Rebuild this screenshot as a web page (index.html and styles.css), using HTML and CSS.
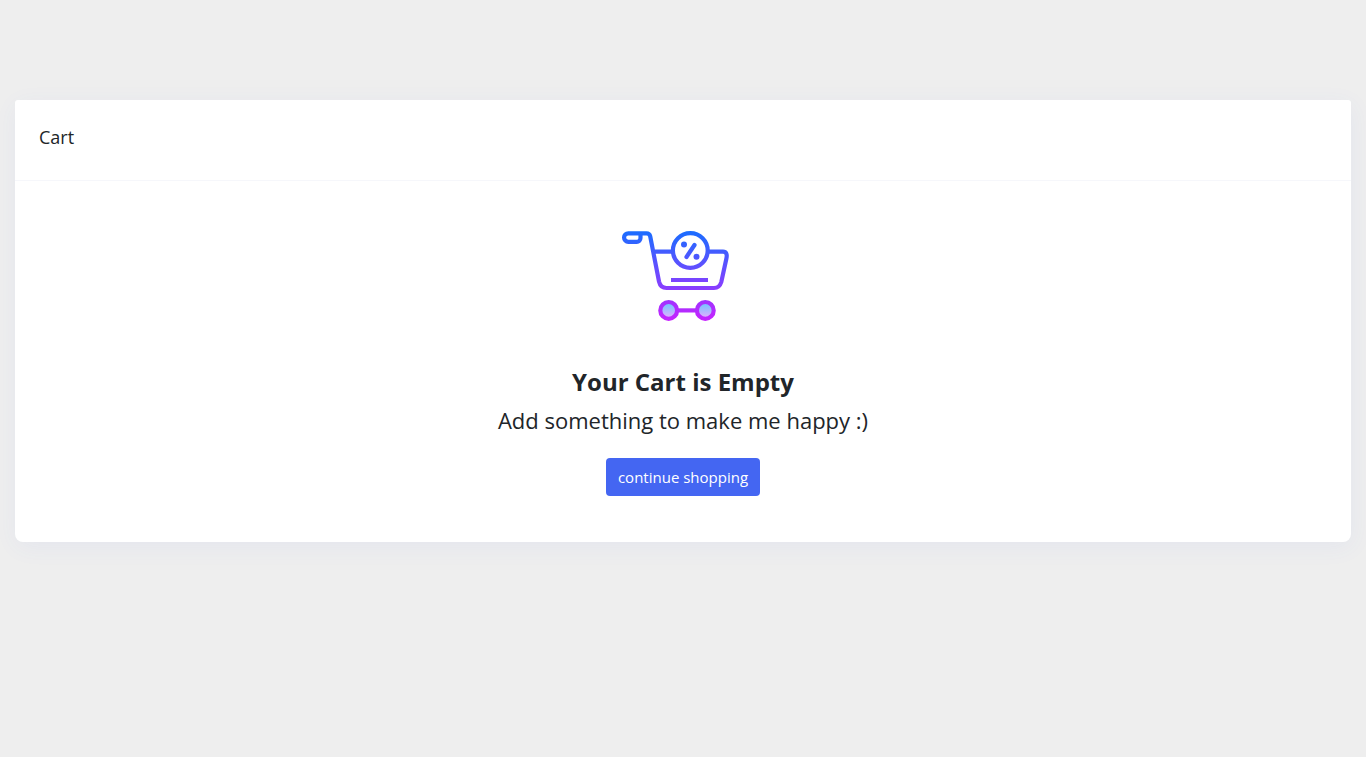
FILE: index.html
```
<!DOCTYPE html>
<html lang="en">
<head>
<meta charset="utf-8">
<meta name="viewport" content="width=device-width, initial-scale=1">
<title>Cart</title>
<link rel="stylesheet" href="styles.css">
</head>
<body>
<main class="page">
  <section class="card">
    <header class="card-header"><h5 class="card-title">Cart</h5></header>
    <div class="card-body">
      <svg class="cart-icon" viewBox="0 0 130 130" fill="none" aria-hidden="true">
        <defs>
          <linearGradient id="line" gradientUnits="userSpaceOnUse" x1="0" y1="20" x2="0" y2="110">
            <stop offset="0" stop-color="#1a6dff"/><stop offset="1" stop-color="#c822ff"/>
          </linearGradient>
          <linearGradient id="wheel" gradientUnits="userSpaceOnUse" x1="0" y1="92" x2="0" y2="107">
            <stop offset="0" stop-color="#6dc7ff"/><stop offset="1" stop-color="#e6abff"/>
          </linearGradient>
        </defs>
        <g stroke="url(#line)" stroke-width="4.200">
          <path d="M30.500 22.300V27a3.800 3.800 0 0 1-3.800 3.800H18.300a4.250 4.250 0 0 1 0-8.500h18.200q3 0 3.700 3L49 70.500q1.500 6.500 7.500 6.500h47.500q5.500 0 7.300-6L116.300 48q1.700-7.300-3.300-7.300H98M63 40.700H43.500"/>
          <circle cx="80.300" cy="39.500" r="17.400"/>
          <path d="M61 69H98"/>
          <path d="M84.500 34L76.500 46" stroke-linecap="round"/>
          <path d="M67 99.400H87"/>
          <circle cx="58.700" cy="99.400" r="8.400" fill="url(#wheel)"/>
          <circle cx="95.300" cy="99.400" r="8.400" fill="url(#wheel)"/>
        </g>
        <g fill="url(#line)"><circle cx="74" cy="33.500" r="3"/><circle cx="86.500" cy="45.700" r="3"/></g>
      </svg>
      <h3 class="headline">Your Cart is Empty</h3>
      <h4 class="message">Add something to make me happy :)</h4>
      <a class="button" href="#">continue shopping</a>
    </div>
  </section>
</main>
</body>
</html>
```
FILE: styles.css
```
*, *::before, *::after { box-sizing: border-box; }
body {
  margin: 0;
  background: #eeeeee;
  color: #212529;
  font-family: "Open Sans", "Noto Sans", sans-serif;
}
.page { padding: 100px 15px 30px; }
.card {
  background: #fff;
  border-radius: 3px 3px 8px 8px;
  box-shadow: 1px 5px 24px rgba(68, 102, 242, 0.06);
}
.card-header { padding: 24px 24px 30px; border-bottom: 1px solid #f6f7fb; }
.card-title { margin: 0; font-size: 18px; font-weight: 400; line-height: 26px; }
.card-body {
  display: flex;
  flex-direction: column;
  align-items: center;
  padding: 30px 30px 46px;
  text-align: center;
}
.cart-icon { width: 130px; height: 130px; margin: 0 16px 24px 0; }
.headline { margin: 0 0 8px; font-size: 24px; font-weight: 700; line-height: 34px; }
.message { margin: 0 0 24px; font-size: 22px; font-weight: 400; line-height: 27px; }
.button {
  padding: 8px 12px;
  border-radius: 4px;
  background: #4466f2;
  color: #fff;
  font-size: 15px;
  font-weight: 500;
  line-height: 22px;
  text-decoration: none;
}
.button:hover { background: #2d52ea; }
```
